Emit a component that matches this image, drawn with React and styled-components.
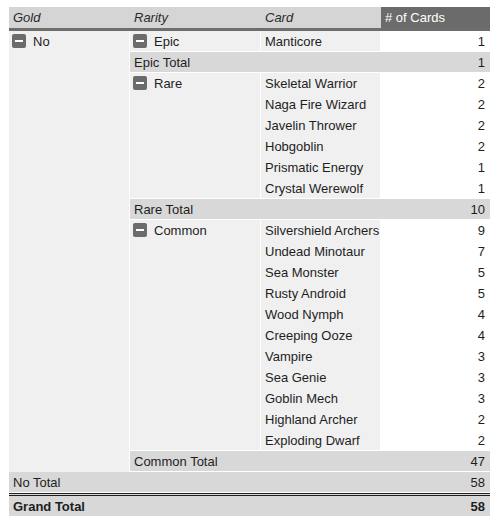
import React from "react";
import styled, { createGlobalStyle } from "styled-components";

const GlobalStyle = createGlobalStyle`
  body {
    margin: 0;
    background: #ffffff;
    font-family: "Liberation Sans", Arial, sans-serif;
  }
`;

const Page = styled.div`
  padding: 7px 7px 0 9px;
`;

const Table = styled.table`
  width: 481px;
  border-collapse: separate;
  border-spacing: 0;
  table-layout: fixed;
  font-size: 13px;
  color: #1e1e1e;
`;

const HeadCell = styled.th`
  height: 24px;
  padding: 0 4px;
  text-align: left;
  font-weight: normal;
  font-style: ${(p) => (p.$value ? "normal" : "italic")};
  background: ${(p) => (p.$value ? "#6b6b6b" : "#d5d5d5")};
  color: ${(p) => (p.$value ? "#ffffff" : "#2a2a2a")};
  border-bottom: 3px solid #6e6e6e;
  box-sizing: border-box;
`;

const Cell = styled.td`
  height: ${(p) => (p.$last ? "20px" : "21px")};
  padding: 0 4px;
  vertical-align: ${(p) => (p.$top ? "top" : "middle")};
  background: #f0f0f0;
  border-bottom: ${(p) => (p.$last ? "1px solid #ffffff" : "0")};
  border-right: 1px solid #ffffff;
  white-space: nowrap;
`;

const CountCell = styled.td`
  height: 20px;
  padding: 0 5px 0 4px;
  text-align: right;
  background: #ffffff;
  border-bottom: 1px solid #ffffff;
`;

const TotalCell = styled.td`
  height: 20px;
  padding: ${(p) => (p.$num ? "0 5px 0 4px" : "0 4px")};
  text-align: ${(p) => (p.$num ? "right" : "left")};
  background: #d8d8d8;
  border-bottom: 1px solid #ffffff;
  font-weight: ${(p) => (p.$grand ? "bold" : "normal")};
  border-top: ${(p) => (p.$grand ? "3px double #1c1c1c" : "0")};
`;

const Group = styled.div`
  display: flex;
  align-items: center;
  gap: 7px;
  height: 20px;
  margin-left: -1px;
`;

const Toggle = styled.span`
  width: 14px;
  height: 14px;
  border-radius: 2px;
  background: #6b6b6b;
  display: flex;
  align-items: center;
  justify-content: center;

  &::after {
    content: "";
    width: 8px;
    height: 2px;
    background: #ffffff;
  }
`;

const groups = [
  { rarity: "Epic", total: 1, cards: [["Manticore", 1]] },
  {
    rarity: "Rare",
    total: 10,
    cards: [
      ["Skeletal Warrior", 2],
      ["Naga Fire Wizard", 2],
      ["Javelin Thrower", 2],
      ["Hobgoblin", 2],
      ["Prismatic Energy", 1],
      ["Crystal Werewolf", 1],
    ],
  },
  {
    rarity: "Common",
    total: 47,
    cards: [
      ["Silvershield Archers", 9],
      ["Undead Minotaur", 7],
      ["Sea Monster", 5],
      ["Rusty Android", 5],
      ["Wood Nymph", 4],
      ["Creeping Ooze", 4],
      ["Vampire", 3],
      ["Sea Genie", 3],
      ["Goblin Mech", 3],
      ["Highland Archer", 2],
      ["Exploding Dwarf", 2],
    ],
  },
];

const goldSpan = groups.reduce((n, g) => n + g.cards.length + 1, 0);

export default function App() {
  const rows = [];
  groups.forEach((g, gi) => {
    g.cards.forEach(([card, count], ci) => {
      const last = ci === g.cards.length - 1;
      rows.push(
        <tr key={g.rarity + card}>
          {gi === 0 && ci === 0 && (
            <Cell $top rowSpan={goldSpan}>
              <Group>
                <Toggle />
                No
              </Group>
            </Cell>
          )}
          {ci === 0 && (
            <Cell $top $last rowSpan={g.cards.length}>
              <Group>
                <Toggle />
                {g.rarity}
              </Group>
            </Cell>
          )}
          <Cell $last={last}>{card}</Cell>
          <CountCell>{count}</CountCell>
        </tr>
      );
    });
    rows.push(
      <tr key={g.rarity + "-total"}>
        <TotalCell colSpan={2}>{g.rarity} Total</TotalCell>
        <TotalCell $num>{g.total}</TotalCell>
      </tr>
    );
  });

  return (
    <Page>
      <GlobalStyle />
      <Table>
        <colgroup>
          <col style={{ width: 121 }} />
          <col style={{ width: 131 }} />
          <col style={{ width: 120 }} />
          <col style={{ width: 109 }} />
        </colgroup>
        <thead>
          <tr>
            <HeadCell>Gold</HeadCell>
            <HeadCell>Rarity</HeadCell>
            <HeadCell>Card</HeadCell>
            <HeadCell $value># of Cards</HeadCell>
          </tr>
        </thead>
        <tbody>
          {rows}
          <tr>
            <TotalCell colSpan={3}>No Total</TotalCell>
            <TotalCell $num>58</TotalCell>
          </tr>
          <tr>
            <TotalCell $grand colSpan={3}>Grand Total</TotalCell>
            <TotalCell $grand $num>58</TotalCell>
          </tr>
        </tbody>
      </Table>
    </Page>
  );
}
